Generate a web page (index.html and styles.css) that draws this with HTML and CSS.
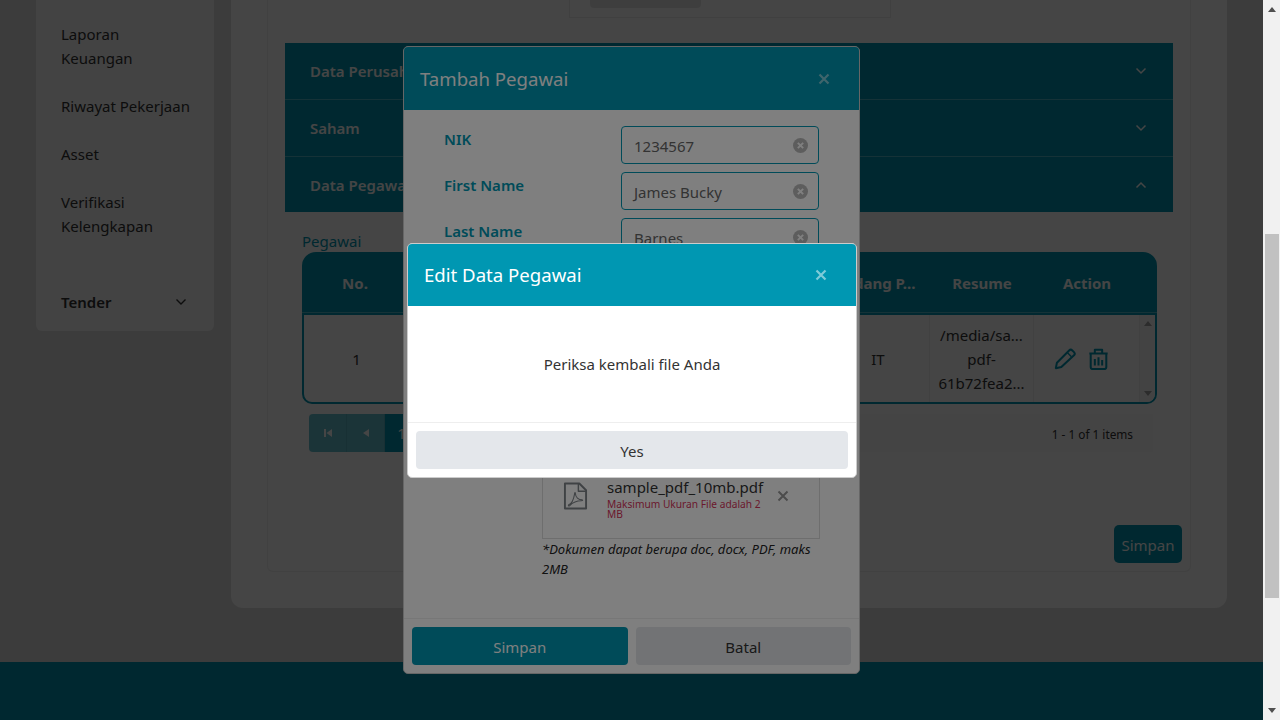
FILE: index.html
```html
<!DOCTYPE html>
<html lang="en">
<head>
  <meta charset="UTF-8" />
  <meta name="viewport" content="width=device-width, initial-scale=1.0"/>
  <title>Edit Data Pegawai</title>
  <link rel="stylesheet" href="styles.css">
</head>
<body>
  <div class="viewport">
    <div class="page">
      <div class="columns">
        <aside class="sidebar">
          <a class="side-link">Laporan Keuangan</a>
          <a class="side-link">Riwayat Pekerjaan</a>
          <a class="side-link">Asset</a>
          <a class="side-link">Verifikasi Kelengkapan</a>
          <div class="side-group">
            <span>Tender</span>
            <svg width="12" height="12" viewBox="0 0 12 12"><path d="M1.500 3.500 6 8l4.500-4.500" fill="none" stroke="currentColor" stroke-width="1.400"/></svg>
          </div>
        </aside>

        <main class="main-card">
          <div class="inner-card">
            <div class="photo-box"><div class="photo-btn"></div></div>

            <div class="accordion">
              <div class="acc-row"><span>Data Perusahaan</span><svg class="chev" width="12" height="12" viewBox="0 0 12 12"><path d="M1.500 3.500 6 8l4.500-4.500" fill="none" stroke="currentColor" stroke-width="1.500"/></svg></div>
              <div class="acc-row"><span>Saham</span><svg class="chev" width="12" height="12" viewBox="0 0 12 12"><path d="M1.500 3.500 6 8l4.500-4.500" fill="none" stroke="currentColor" stroke-width="1.500"/></svg></div>
              <div class="acc-row"><span>Data Pegawai</span><svg class="chev" width="12" height="12" viewBox="0 0 12 12"><path d="M1.500 8.500 6 4l4.500 4.500" fill="none" stroke="currentColor" stroke-width="1.500"/></svg></div>
            </div>

            <div class="grid-section">
              <div class="grid-title">Pegawai</div>
              <div class="grid">
                <div class="grid-head">
                  <div class="col-no">No.</div>
                  <div class="col-gap"></div>
                  <div class="col-bidang">Bidang P...</div>
                  <div class="col-resume">Resume</div>
                  <div class="col-action">Action</div>
                  <div class="col-bar"></div>
                </div>
                <div class="grid-body">
                  <div class="col-no">1</div>
                  <div class="col-gap"></div>
                  <div class="col-bidang">IT</div>
                  <div class="col-resume"><span>/media/sa...</span><span>pdf-</span><span>61b72fea2...</span></div>
                  <div class="col-action">
                    <svg width="22" height="22" viewBox="0 0 24 24" fill="none" stroke="#0097b2" stroke-width="2.200" stroke-linejoin="round"><path d="M2 22l1.200-6L16.500 2.700a2.500 2.500 0 0 1 3.500 0l1.800 1.800a2.500 2.500 0 0 1 0 3.500L8 20.800z"/><path d="M14.500 5l4.500 4.500" stroke-width="1.500"/></svg>
                    <svg width="21" height="22" viewBox="0 0 22 24" fill="none" stroke="#0097b2" stroke-width="2.200" stroke-linejoin="round"><path d="M1 6h20M7 6V2h8v4M2.500 6v15a2 2 0 0 0 2 2h13a2 2 0 0 0 2-2V6"/><path d="M7 12v7M11 10v9M15 13v6"/></svg>
                  </div>
                  <div class="col-bar grid-scroll">
                    <svg width="8" height="5" viewBox="0 0 8 5"><path d="M4 0l4 5H0z" fill="#a3a3a3"/></svg>
                    <svg width="8" height="5" viewBox="0 0 8 5"><path d="M4 5l4-5H0z" fill="#a3a3a3"/></svg>
                  </div>
                </div>
              </div>
              <div class="pager">
                <div class="pager-btns">
                  <div class="pager-btn"><svg width="10" height="10" viewBox="0 0 10 10"><path d="M1 1h2v8H1zM9 1v8L3.500 5z" fill="#fff"/></svg></div>
                  <div class="pager-btn"><svg width="10" height="10" viewBox="0 0 10 10"><path d="M8 1v8L2 5z" fill="#fff"/></svg></div>
                  <div class="pager-btn active">1</div>
                </div>
                <div class="pager-info">1 - 1 of 1 items</div>
              </div>
            </div>

            <div class="save-row"><button class="btn-save">Simpan</button></div>
          </div>
        </main>
      </div>
      <footer class="footer"></footer>
    </div>

    <div class="backdrop first"></div>
    <section class="modal tambah">
      <header class="modal-head">
        <h2>Tambah Pegawai</h2>
        <svg class="close" width="12" height="12" viewBox="0 0 12 12"><path d="M1.500 1.500l9 9M10.500 1.500l-9 9" stroke="currentColor" stroke-width="2.200"/></svg>
      </header>
      <div class="modal-form">
        <div class="form-row">
          <label>NIK</label>
          <div class="input"><span>1234567</span><svg width="15" height="15" viewBox="0 0 14 14"><circle cx="7" cy="7" r="7" fill="#bbb"/><path d="M4.500 4.500l5 5M9.500 4.500l-5 5" stroke="#fff" stroke-width="1.800"/></svg></div>
        </div>
        <div class="form-row">
          <label>First Name</label>
          <div class="input"><span>James Bucky</span><svg width="15" height="15" viewBox="0 0 14 14"><circle cx="7" cy="7" r="7" fill="#bbb"/><path d="M4.500 4.500l5 5M9.500 4.500l-5 5" stroke="#fff" stroke-width="1.800"/></svg></div>
        </div>
        <div class="form-row">
          <label>Last Name</label>
          <div class="input"><span>Barnes</span><svg width="15" height="15" viewBox="0 0 14 14"><circle cx="7" cy="7" r="7" fill="#bbb"/><path d="M4.500 4.500l5 5M9.500 4.500l-5 5" stroke="#fff" stroke-width="1.800"/></svg></div>
        </div>
        <div class="upload">
          <div class="file-box">
            <svg width="25" height="30" viewBox="0 0 26 30" fill="none" stroke="#7f8489" stroke-width="2" stroke-linejoin="round"><path d="M2 2h15l7 7v19H2z"/><path d="M16 2v8h8" stroke-width="1.500"/><path d="M6 24c3-1 5-5 6-11 0-2 1-2 1 0 0 3 3 6 7 6M6 24c-1 1 0 2 1 1 2-2 7-5 12-5 2 0 2-1 0-1" stroke-width="1.100"/></svg>
            <div class="file-text">
              <div class="file-name">sample_pdf_10mb.pdf</div>
              <div class="file-warn">Maksimum Ukuran File adalah 2 MB</div>
            </div>
            <svg class="file-x" width="12" height="12" viewBox="0 0 12 12"><path d="M1.500 1.500l9 9M10.500 1.500l-9 9" stroke="currentColor" stroke-width="2"/></svg>
          </div>
          <p class="file-note">*Dokumen dapat berupa doc, docx, PDF, maks 2MB</p>
        </div>
      </div>
      <div class="modal-foot">
        <button class="btn primary">Simpan</button>
        <button class="btn plain">Batal</button>
      </div>
    </section>

    <div class="backdrop second"></div>
    <section class="modal edit">
      <header class="modal-head">
        <h2>Edit Data Pegawai</h2>
        <svg class="close" width="12" height="12" viewBox="0 0 12 12"><path d="M1.500 1.500l9 9M10.500 1.500l-9 9" stroke="currentColor" stroke-width="2.200"/></svg>
      </header>
      <div class="modal-msg">Periksa kembali file Anda</div>
      <div class="modal-foot">
        <button class="btn plain">Yes</button>
      </div>
    </section>
  </div>

  <div class="scrollbar">
    <svg class="scroll-up" width="8" height="5" viewBox="0 0 8 5"><path d="M4 0l4 5H0z" fill="#505050"/></svg>
    <div class="thumb"></div>
    <svg class="scroll-down" width="8" height="5" viewBox="0 0 8 5"><path d="M4 5l4-5H0z" fill="#505050"/></svg>
  </div>
</body>
</html>
```

FILE: styles.css
```css
* {
  box-sizing: border-box;
}

html, body {
  margin: 0;
  height: 720px;
  overflow: hidden;
}

body {
  display: flex;
  font-family: 'Noto Sans', sans-serif;
  font-size: 15px;
  line-height: 24px;
  color: #333;
}

button {
  font-family: inherit;
  font-size: 15px;
  border: 0;
}

.viewport {
  position: relative;
  flex: 1;
  overflow: hidden;
  background: #e0e0e0;
}

.page {
  display: flex;
  flex-direction: column;
  height: 720px;
}

.columns {
  display: flex;
  gap: 17px;
  padding: 0 36px;
  height: 662px;
  align-items: flex-start;
}

/* sidebar */
.sidebar {
  width: 178px;
  height: 331px;
  padding: 22px 25px 0;
  background: #f8f8f8;
  border-radius: 0 0 6px 6px;
}

.side-link {
  display: block;
  margin: 0 -5px 24px 0;
}

.side-group {
  display: flex;
  align-items: center;
  justify-content: space-between;
  margin-top: 52px;
  padding-right: 2px;
  font-weight: 600;
}

/* main card */
.main-card {
  flex: 1;
  height: 608px;
  padding: 0 36px;
  background: #fff;
  border-radius: 0 0 12px 12px;
}

.inner-card {
  height: 572px;
  padding: 0 8px 0 9px;
  border: 1px solid #f0f0f0;
  border-top: 0;
  border-radius: 0 0 6px 6px;
}

.photo-box {
  width: 322px;
  height: 18px;
  margin: 0 auto 25px;
  padding: 0 20px;
  border: 1px solid #ececec;
  border-top: 0;
}

.photo-btn {
  width: 111px;
  height: 8px;
  background: #e8e8e8;
  border-radius: 0 0 4px 4px;
}

.accordion {
  margin: 0 9px 0 8px;
  background: #0097b2;
  color: #fff;
  font-weight: 600;
}

.acc-row {
  display: flex;
  align-items: center;
  justify-content: space-between;
  height: 57px;
  padding: 0 26px 0 25px;
  border-bottom: 1px solid #4fb9cc;
}

.acc-row:last-child {
  height: 55px;
  border-bottom: 0;
}

.grid-section {
  padding: 18px 25px 0;
}

.grid-title {
  color: #0097b2;
  line-height: 22px;
  height: 22px;
}

.grid-head, .grid-body {
  display: flex;
  text-align: center;
}

.grid-head {
  height: 61px;
  padding-top: 2px;
  align-items: center;
  background: #0097b2;
  color: #fff;
  font-weight: 700;
  border-radius: 14px 14px 0 0;
  border-bottom: 1px solid #4fb9cc;
}

.grid-body {
  height: 91px;
  border: 2px solid #0097b2;
  border-radius: 0 0 10px 10px;
}

.grid-body > div {
  display: flex;
  flex-direction: column;
  justify-content: center;
  align-items: center;
  border-right: 1px solid #f2f2f2;
}

.col-no { width: 106px; }
.col-gap { width: 417px; }
.col-bidang { width: 105px; }
.col-resume { width: 104px; }
.col-action { width: 106px; }
.col-bar { flex: 1; }

.grid-body .col-no {
  width: 104px;
  padding-left: 2px;
}

.grid-body .col-bidang {
  padding-left: 2px;
}

.grid-body .col-action {
  flex-direction: row;
  gap: 12px;
  padding-right: 10px;
}

.grid-body .grid-scroll {
  justify-content: space-between;
  padding: 6px 0;
  background: #fafafa;
  border-right: 0;
  border-radius: 0 0 8px 0;
}

.pager {
  display: flex;
  align-items: center;
  justify-content: space-between;
  height: 38px;
  margin: 10px 4px 0 7px;
  padding-right: 20px;
  background: #fcfcfc;
  font-size: 11.800px;
}

.pager-info {
  padding-top: 1px;
}

.pager-btns {
  display: flex;
  border-radius: 4px;
  overflow: hidden;
}

.pager-btn {
  display: flex;
  align-items: center;
  justify-content: center;
  width: 38px;
  height: 38px;
  background: #66c1d1;
  border-right: 1px solid #5ab2c2;
}

.pager-btn.active {
  width: 34px;
  background: #0097b2;
  color: #fff;
  font-size: 15px;
}

.save-row {
  display: flex;
  justify-content: flex-end;
  margin-top: 73px;
}

.btn-save {
  width: 68px;
  height: 38px;
  padding: 2px 0 0;
  background: #0097b2;
  color: #fff;
  border-radius: 5px;
}

.footer {
  flex: 1;
  background: #0097b2;
}

/* overlays */
.backdrop {
  position: absolute;
  inset: 0;
}

.backdrop.first {
  background: rgba(0, 0, 0, 0.46);
}

.backdrop.second {
  background: rgba(0, 0, 0, 0.5);
}

.modal {
  position: absolute;
  display: flex;
  flex-direction: column;
  background: #fff;
  border: 1px solid #ccc;
  border-radius: 5px;
  overflow: hidden;
}

.modal.tambah {
  left: 403px;
  top: 46px;
  width: 457px;
  height: 628px;
}

.modal.edit {
  left: 407px;
  top: 243px;
  width: 450px;
  height: 235px;
}

.modal-head {
  display: flex;
  align-items: center;
  justify-content: space-between;
  height: 63px;
  flex: none;
  padding: 0 29px 0 16px;
  background: #0097b2;
  color: #fff;
}

.edit .modal-head {
  height: 62px;
}

.modal-head h2 {
  margin: 0;
  font-size: 18.600px;
  font-weight: 400;
}

.tambah .modal-head h2 {
  padding-top: 1px;
}

.modal-head .close {
  color: #7fcbd8;
}

.modal-msg {
  flex: 1;
  display: flex;
  align-items: center;
  justify-content: center;
}

.modal-form {
  flex: 1;
  display: flex;
  flex-direction: column;
  padding: 16px 0 0 40px;
}

.form-row {
  display: flex;
  height: 46px;
}

.form-row label {
  width: 177px;
  padding-top: 1px;
  color: #0097b2;
  font-weight: 600;
}

.input {
  display: flex;
  align-items: center;
  justify-content: space-between;
  width: 198px;
  height: 38px;
  padding: 0 10px 0 12px;
  border: 1px solid #0097b2;
  border-radius: 4px;
}

.input span {
  padding-top: 2px;
  color: #666;
}

.upload {
  margin-top: auto;
  margin-left: 98px;
  width: 278px;
  padding-bottom: 39px;
}

.file-box {
  display: flex;
  height: 200px;
  align-items: flex-end;
  padding: 0 20px 19px 20px;
  border: 1px solid #ddd;
}

.file-box > svg:first-child {
  margin-bottom: 8px;
}

.file-text {
  width: 158px;
  margin: 0 0 0 19px;
}

.file-name {
  line-height: 24px;
}

.file-warn {
  font-size: 10.200px;
  line-height: 10px;
  color: #d6335a;
}

.file-x {
  margin: 0 0 17px 12px;
  color: #999;
}

.file-note {
  margin: 0;
  font-size: 13px;
  line-height: 20px;
  font-style: italic;
  color: #222;
}

.modal-foot {
  display: flex;
  gap: 8px;
  flex: none;
  height: 55px;
  padding: 8px;
  border-top: 1px solid #eee;
}

.btn {
  flex: 1;
  height: 38px;
  padding: 1px 0 0;
  border-radius: 4px;
  color: #333;
}

.btn.primary {
  background: #0097b2;
  color: #fff;
}

.btn.plain {
  background: #e4e7eb;
}

/* browser scrollbar */
.scrollbar {
  position: relative;
  flex: none;
  width: 17px;
  background: #f1f1f1;
}

.thumb {
  height: 364px;
  margin: 234px 1px 0 2px;
  background: #c1c1c1;
}

.scroll-up {
  position: absolute;
  left: 5px;
  top: 7px;
}

.scroll-down {
  position: absolute;
  left: 5px;
  bottom: 7px;
}
```
